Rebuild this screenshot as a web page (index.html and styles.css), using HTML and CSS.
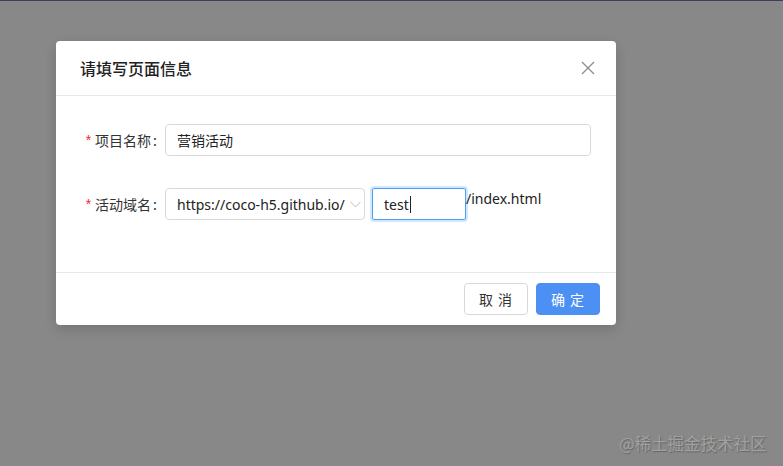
FILE: index.html
```html
<!DOCTYPE html>
<html lang="zh">
<head>
<meta charset="utf-8">
<link rel="stylesheet" href="styles.css">
</head>
<body>
<div class="page">
  <div class="modal">
    <div class="modal-header">
      <div class="modal-title">请填写页面信息</div>
      <button class="modal-close" aria-label="close">
        <svg width="14" height="14" viewBox="0 0 14 14"><path d="M1 1 L13 13 M13 1 L1 13" stroke="#8c8c8c" stroke-width="1.3" fill="none"/></svg>
      </button>
    </div>
    <div class="modal-body">
      <div class="form-item">
        <div class="form-label"><span class="req">*</span>项目名称</div>
        <div class="form-control">
          <div class="input wide">营销活动</div>
        </div>
      </div>
      <div class="form-item">
        <div class="form-label"><span class="req">*</span>活动域名</div>
        <div class="form-control">
          <div class="select">
            <span class="select-text">https://coco-h5.github.io/</span>
            <svg class="chev" width="11" height="7" viewBox="0 0 11 7"><path d="M0.5 0.8 L5.5 6 L10.5 0.8" stroke="#bfbfbf" stroke-width="1" fill="none"/></svg>
          </div>
          <div class="input focused">test<span class="caret"></span></div>
          <span class="suffix">/index.html</span>
        </div>
      </div>
    </div>
    <div class="modal-footer">
      <button class="btn">取 消</button>
      <button class="btn primary">确 定</button>
    </div>
  </div>
</div>
<div class="watermark">@稀土掘金技术社区</div>
</body>
</html>
```

FILE: styles.css
```css
* { box-sizing: border-box; }
html, body { margin: 0; padding: 0; }
body {
  width: 783px;
  height: 466px;
  background: #888888;
  border-top: 1px solid #3e3d5b;
  font-family: "Noto Sans", "Noto Sans CJK SC", sans-serif;
  font-size: 14px;
  color: rgba(0,0,0,0.85);
  position: relative;
  overflow: hidden;
}
.page {
  padding: 40px 0 0 56px;
}
.modal {
  width: 560px;
  background: #fff;
  border-radius: 4px;
  box-shadow: 0 4px 12px rgba(0,0,0,0.15);
}
.modal-header {
  height: 55px;
  padding: 0 24px;
  border-bottom: 1px solid #e8e8e8;
  display: flex;
  align-items: center;
  justify-content: space-between;
}
.modal-title {
  font-family: "Noto Sans CJK SC", sans-serif;
  font-size: 16px;
  font-weight: 500;
  color: #222;
}
.modal-close {
  border: 0;
  background: none;
  padding: 0;
  margin-right: -3px;
  display: flex;
  cursor: pointer;
}
.modal-body {
  padding: 24px;
}
.form-item {
  display: flex;
  height: 40px;
  margin-bottom: 24px;
}
.form-label {
  width: 85px;
  display: flex;
  align-items: center;
  justify-content: flex-end;
  font-family: "Noto Sans CJK SC", sans-serif;
  font-size: 14px;
  color: #333;
}
.form-label::after {
  content: ":";
  margin: 0 8px 0 2px;
}
.req {
  color: #f5222d;
  margin-right: 4px;
  font-family: "Liberation Sans", sans-serif;
}
.form-control {
  flex: 1;
  display: flex;
  align-items: center;
}
.input {
  height: 32px;
  border: 1px solid #d9d9d9;
  border-radius: 4px;
  padding: 0 11px;
  display: flex;
  align-items: center;
  color: #222;
  font-family: "Noto Sans", "Noto Sans CJK SC", sans-serif;
}
.input.wide { width: 426px; font-family: "Noto Sans CJK SC", sans-serif; }
.select {
  width: 200px;
  height: 32px;
  border: 1px solid #d9d9d9;
  border-radius: 4px;
  padding: 0 3px 0 11px;
  display: flex;
  align-items: center;
  justify-content: space-between;
  color: #222;
}
.chev { margin-top: 1px; }
.input.focused {
  width: 94px;
  margin-left: 7px;
  border-color: #4e9cf5;
  box-shadow: 0 0 0 2px rgba(24,144,255,0.2);
  border-radius: 2px;
}
.caret {
  display: inline-block;
  width: 1px;
  height: 17px;
  background: #222;
  margin-left: 1px;
}
.suffix {
  align-self: flex-start;
  line-height: 22px;
  margin-top: 4px;
  color: #222;
}
.modal-footer {
  border-top: 1px solid #e8e8e8;
  padding: 10px 16px;
  display: flex;
  justify-content: flex-end;
  gap: 8px;
}
.btn {
  width: 64px;
  height: 32px;
  border: 1px solid #d9d9d9;
  border-radius: 4px;
  background: #fff;
  color: #333;
  font-family: "Noto Sans CJK SC", sans-serif;
  font-size: 14px;
  letter-spacing: 1px;
  padding: 0;
  cursor: pointer;
}
.btn.primary {
  background: #4b90f2;
  border-color: #4b90f2;
  color: #fff;
}
.watermark {
  position: absolute;
  left: 619px;
  top: 430px;
  font-family: "Noto Sans CJK SC", sans-serif;
  font-size: 16.5px;
  color: #a0a0a0;
  text-shadow: 1px 1px 1px #666;
}
```
